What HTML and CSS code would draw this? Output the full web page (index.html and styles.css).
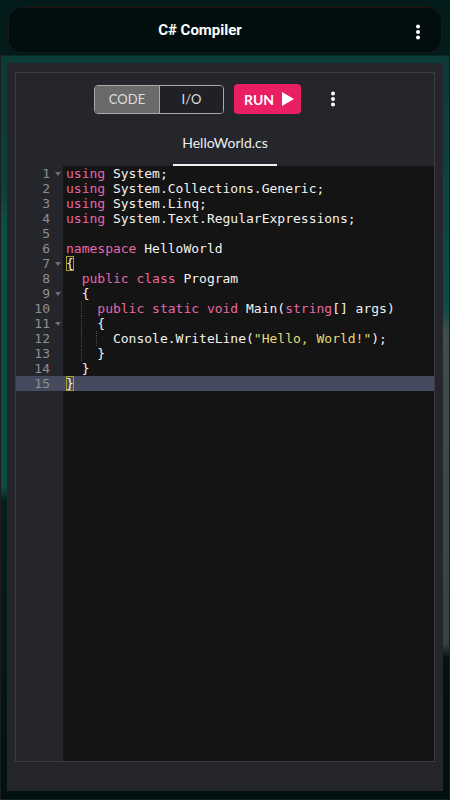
FILE: index.html
```html
<!DOCTYPE html>
<html lang="en">
<head>
<meta charset="UTF-8">
<meta name="viewport" content="width=device-width, initial-scale=1.0">
<title>C# Compiler</title>
<link rel="stylesheet" href="styles.css">
</head>
<body>
<header class="topbar">
    <h1>C# Compiler</h1>
    <svg class="menu-dots" width="6" height="16" viewBox="0 0 6 16">
        <circle cx="3" cy="2.5" r="2" fill="#fff"/>
        <circle cx="3" cy="8" r="2" fill="#fff"/>
        <circle cx="3" cy="13.5" r="2" fill="#fff"/>
    </svg>
</header>

<main class="panel">
    <div class="card">
        <div class="editor-box">
            <div class="toolbar">
                <div class="segment">
                    <button class="segment-btn active">CODE</button>
                    <button class="segment-btn">I/O</button>
                </div>
                <button class="run-btn">RUN
                    <svg width="12" height="14" viewBox="0 0 12 14"><path d="M0 0 L12 7 L0 14 Z" fill="#fff"/></svg>
                </button>
                <svg class="tool-dots" width="6" height="16" viewBox="0 0 6 16">
                    <circle cx="3" cy="2.5" r="2" fill="#fff"/>
                    <circle cx="3" cy="8" r="2" fill="#fff"/>
                    <circle cx="3" cy="13.5" r="2" fill="#fff"/>
                </svg>
            </div>

            <div class="tabs">
                <div class="tab">HelloWorld.cs</div>
            </div>

            <div class="editor">
                <div class="gutter">
                    <div class="gl"><span class="num">1</span><span class="fold"></span></div>
                    <div class="gl"><span class="num">2</span></div>
                    <div class="gl"><span class="num">3</span></div>
                    <div class="gl"><span class="num">4</span></div>
                    <div class="gl"><span class="num">5</span></div>
                    <div class="gl"><span class="num">6</span></div>
                    <div class="gl"><span class="num">7</span><span class="fold"></span></div>
                    <div class="gl"><span class="num">8</span></div>
                    <div class="gl"><span class="num">9</span><span class="fold"></span></div>
                    <div class="gl"><span class="num">10</span></div>
                    <div class="gl"><span class="num">11</span><span class="fold"></span></div>
                    <div class="gl"><span class="num">12</span></div>
                    <div class="gl"><span class="num">13</span></div>
                    <div class="gl"><span class="num">14</span></div>
                    <div class="gl active-line"><span class="num">15</span></div>
                </div>
                <div class="code">
<div class="line"><span class="kw">using</span> System;</div>
<div class="line"><span class="kw">using</span> System.Collections.Generic;</div>
<div class="line"><span class="kw">using</span> System.Linq;</div>
<div class="line"><span class="kw">using</span> System.Text.RegularExpressions;</div>
<div class="line"> </div>
<div class="line"><span class="kw">namespace</span> HelloWorld</div>
<div class="line"><span class="bracket">{</span></div>
<div class="line">  <span class="kw">public class</span> Program</div>
<div class="line">  {</div>
<div class="line"><span class="guide">  </span>  <span class="kw">public static void</span> Main(<span class="kw">string</span>[] args)</div>
<div class="line"><span class="guide">  </span>  {</div>
<div class="line"><span class="guide">  </span><span class="guide">  </span>  Console.WriteLine(<span class="str">"Hello, World!"</span>);</div>
<div class="line"><span class="guide">  </span>  }</div>
<div class="line">  }</div>
<div class="line active-line"><span class="bracket">}</span></div>
                </div>
            </div>
        </div>
    </div>
</main>
</body>
</html>
```

FILE: styles.css
```css
html, body {
    height: 100%;
    margin: 0;
}
body {
    display: flex;
    flex-direction: column;
    background: #031b1a;
    font-family: Lato, "Liberation Sans", sans-serif;
    color: #fff;
}

/* top bar */
.topbar {
    position: relative;
    box-sizing: border-box;
    height: 46px;
    margin: 7px 8px 2px;
    border: 1px dotted #3a1f1f;
    border-radius: 14px;
    background: #020e0e;
    display: flex;
    align-items: center;
    justify-content: center;
}
.topbar h1 {
    margin: 0 50px 0 0;
    font-family: Roboto, sans-serif;
    font-size: 15px;
    font-weight: bold;
}
.menu-dots {
    position: absolute;
    right: 20px;
    top: 16px;
}

/* main panel */
.panel {
    flex: 1;
    display: flex;
    box-sizing: border-box;
    padding: 7px 6px 8px;
    border: 1px dotted #3a1f1f;
    background:
        linear-gradient(to bottom, #0b3a37 0%, #0c3f3b 18%, #0f4c47 22%, #0e4b46 58%, #061e1c 60%, #021010 100%) left top / 50% 100% no-repeat,
        linear-gradient(to bottom, #0b3a37 0%, #0f4a46 34%, #3d4e4c 37%, #344442 79%, #031312 81%, #021010 100%) right top / 50% 100% no-repeat;
}
.card {
    flex: 1;
    display: flex;
    background: #25262b;
}
.editor-box {
    flex: 1;
    display: flex;
    flex-direction: column;
    margin: 9px 8px 29px;
    border: 1px solid #3b3c41;
}

/* toolbar */
.toolbar {
    display: flex;
    align-items: center;
    padding: 11px 0 0 78px;
}
.segment {
    display: flex;
    box-sizing: border-box;
    width: 130px;
    height: 29px;
    border: 1px solid #a9a9a9;
    border-radius: 4px;
    overflow: hidden;
}
.segment-btn {
    flex: 1;
    border: none;
    margin: 0;
    padding: 0;
    background: #202127;
    color: #dedede;
    font-family: Lato, sans-serif;
    font-size: 13px;
}
.segment-btn.active {
    flex: 0 0 65px;
    background: #6a6a6a;
    border-right: 1px solid #a9a9a9;
}
.run-btn {
    display: flex;
    align-items: center;
    gap: 8px;
    box-sizing: border-box;
    width: 67px;
    height: 30px;
    margin-left: 10px;
    padding: 0 0 0 10px;
    border: none;
    border-radius: 4px;
    background: #e91e63;
    color: #fff;
    font-family: Lato, sans-serif;
    font-size: 14px;
    font-weight: bold;
}
.tool-dots {
    margin-left: 29px;
}

/* file tab */
.tabs {
    display: flex;
    justify-content: center;
}
.tab {
    width: 104px;
    padding: 20px 0 12px;
    line-height: 18px;
    text-align: center;
    font-size: 14px;
    color: #eeeeee;
    border-bottom: 2px solid #f2f2f2;
}

/* code editor */
.editor {
    flex: 1;
    display: flex;
    font-family: "DejaVu Sans Mono", "Liberation Mono", monospace;
    font-size: 13px;
}
.gutter {
    width: 47px;
    background: #25262b;
    color: #8f8f8f;
}
.gl {
    display: flex;
    align-items: center;
    height: 15px;
}
.num {
    width: 34px;
    text-align: right;
}
.fold {
    margin-left: 5px;
    border-left: 3px solid transparent;
    border-right: 3px solid transparent;
    border-top: 4px solid #6e6e6e;
}
.code {
    flex: 1;
    background: #141414;
    color: #f3f3ef;
}
.line {
    height: 15px;
    line-height: 15px;
    padding-left: 3px;
    white-space: pre;
}
.active-line {
    background: #464a5e;
}
.kw {
    color: #e966a7;
}
.str {
    color: #e3dc74;
}
.bracket {
    box-shadow: inset 0 0 0 1px #a99f2e;
}
.guide {
    background: linear-gradient(#4a4a4a 50%, transparent 50%) right top / 1px 2px repeat-y;
}
```
